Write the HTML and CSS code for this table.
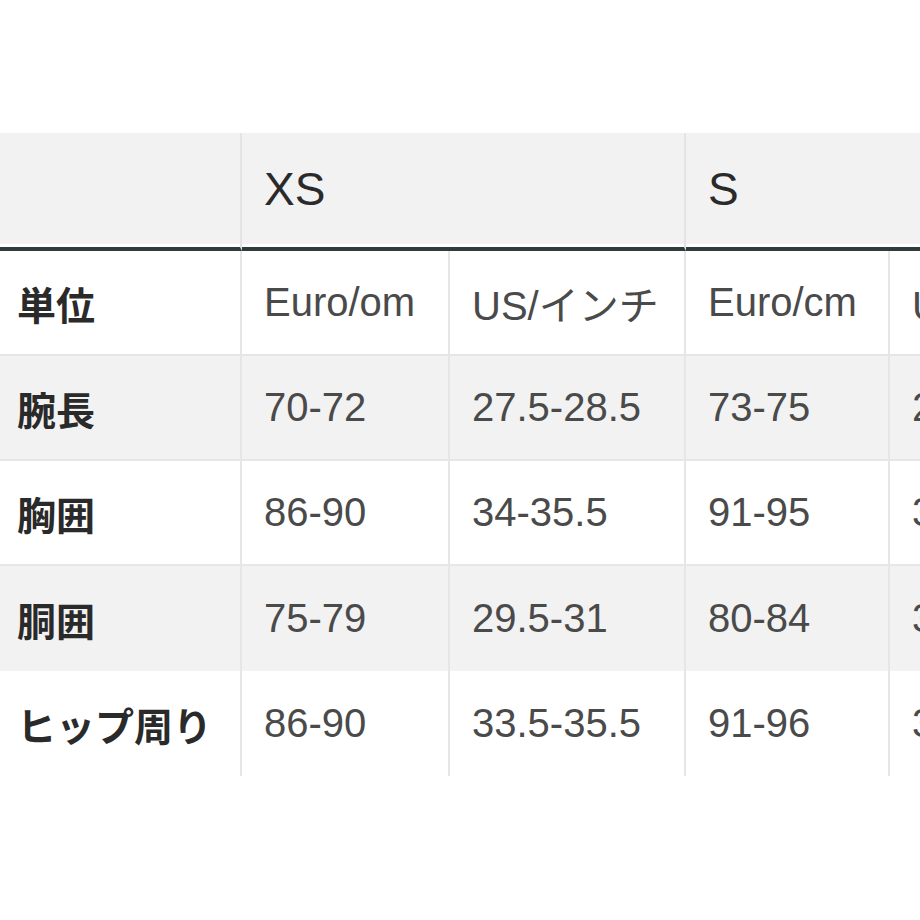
FILE: index.html
```html
<!DOCTYPE html>
<html lang="ja">
<head>
<meta charset="utf-8">
<title>サイズ表</title>
<link rel="stylesheet" href="styles.css">
</head>
<body>
<div class="wrap">
  <table class="size">
    <colgroup>
      <col class="c-label">
      <col class="c-xs-eu">
      <col class="c-xs-us">
      <col class="c-s-eu">
      <col class="c-s-us">
    </colgroup>
    <thead>
      <tr>
        <th class="corner"></th>
        <th colspan="2" class="grp">XS</th>
        <th colspan="2" class="grp">S</th>
      </tr>
    </thead>
    <tbody>
      <tr class="white lined">
        <th>単位</th><td>Euro/om</td><td>US/インチ</td><td>Euro/cm</td><td>US/インチ</td>
      </tr>
      <tr class="gray lined">
        <th>腕長</th><td>70-72</td><td>27.5-28.5</td><td>73-75</td><td>28.5-29.5</td>
      </tr>
      <tr class="white lined">
        <th>胸囲</th><td>86-90</td><td>34-35.5</td><td>91-95</td><td>36-37.5</td>
      </tr>
      <tr class="gray">
        <th>胴囲</th><td>75-79</td><td>29.5-31</td><td>80-84</td><td>31.5-33</td>
      </tr>
      <tr class="white">
        <th>ヒップ周り</th><td>86-90</td><td>33.5-35.5</td><td>91-96</td><td>36-38</td>
      </tr>
    </tbody>
  </table>
</div>
</body>
</html>
```
FILE: styles.css
```css
html, body {
  margin: 0;
  padding: 0;
  background: #ffffff;
  overflow: hidden;
}

.wrap {
  width: 920px;
  height: 920px;
  overflow: hidden;
  padding-top: 133px;
  box-sizing: border-box;
}

.size {
  border-collapse: separate;
  border-spacing: 0;
  table-layout: fixed;
  width: 1126px;
  font-family: "Liberation Sans", Arial, "Noto Sans CJK JP", sans-serif;
}

.c-label { width: 242px; }
.c-xs-eu { width: 208px; }
.c-xs-us { width: 236px; }
.c-s-eu { width: 204px; }
.c-s-us { width: 236px; }

.size th,
.size td {
  padding: 0 0 0 22px;
  text-align: left;
  vertical-align: middle;
  white-space: nowrap;
  box-sizing: border-box;
}

.size thead th {
  background: #f2f2f2;
  height: 118px;
  font-size: 46px;
  font-weight: 400;
  color: #2a2a2a;
  border-bottom: 4px solid #2f3c3c;
  box-shadow: inset 0 -3px 0 #ffffff;
  padding-bottom: 3px;
  border-right: 2px solid #e4e4e4;
}

.size tbody th,
.size tbody td {
  height: 105px;
  border-right: 2px solid #e6e6e6;
}

.size tbody th {
  padding-left: 17px;
  font-family: "Noto Sans CJK JP", "Liberation Sans", sans-serif;
  font-size: 39px;
  font-weight: 700;
  color: #2a2a2a;
}

.size tbody td {
  font-size: 40px;
  color: #4a4a4a;
}

.size tbody tr.lined th,
.size tbody tr.lined td {
  border-bottom: 2px solid #e6e6e6;
}

.size tr.gray th,
.size tr.gray td {
  background: #f2f2f2;
}

.size tr.white th,
.size tr.white td {
  background: #ffffff;
}
```
